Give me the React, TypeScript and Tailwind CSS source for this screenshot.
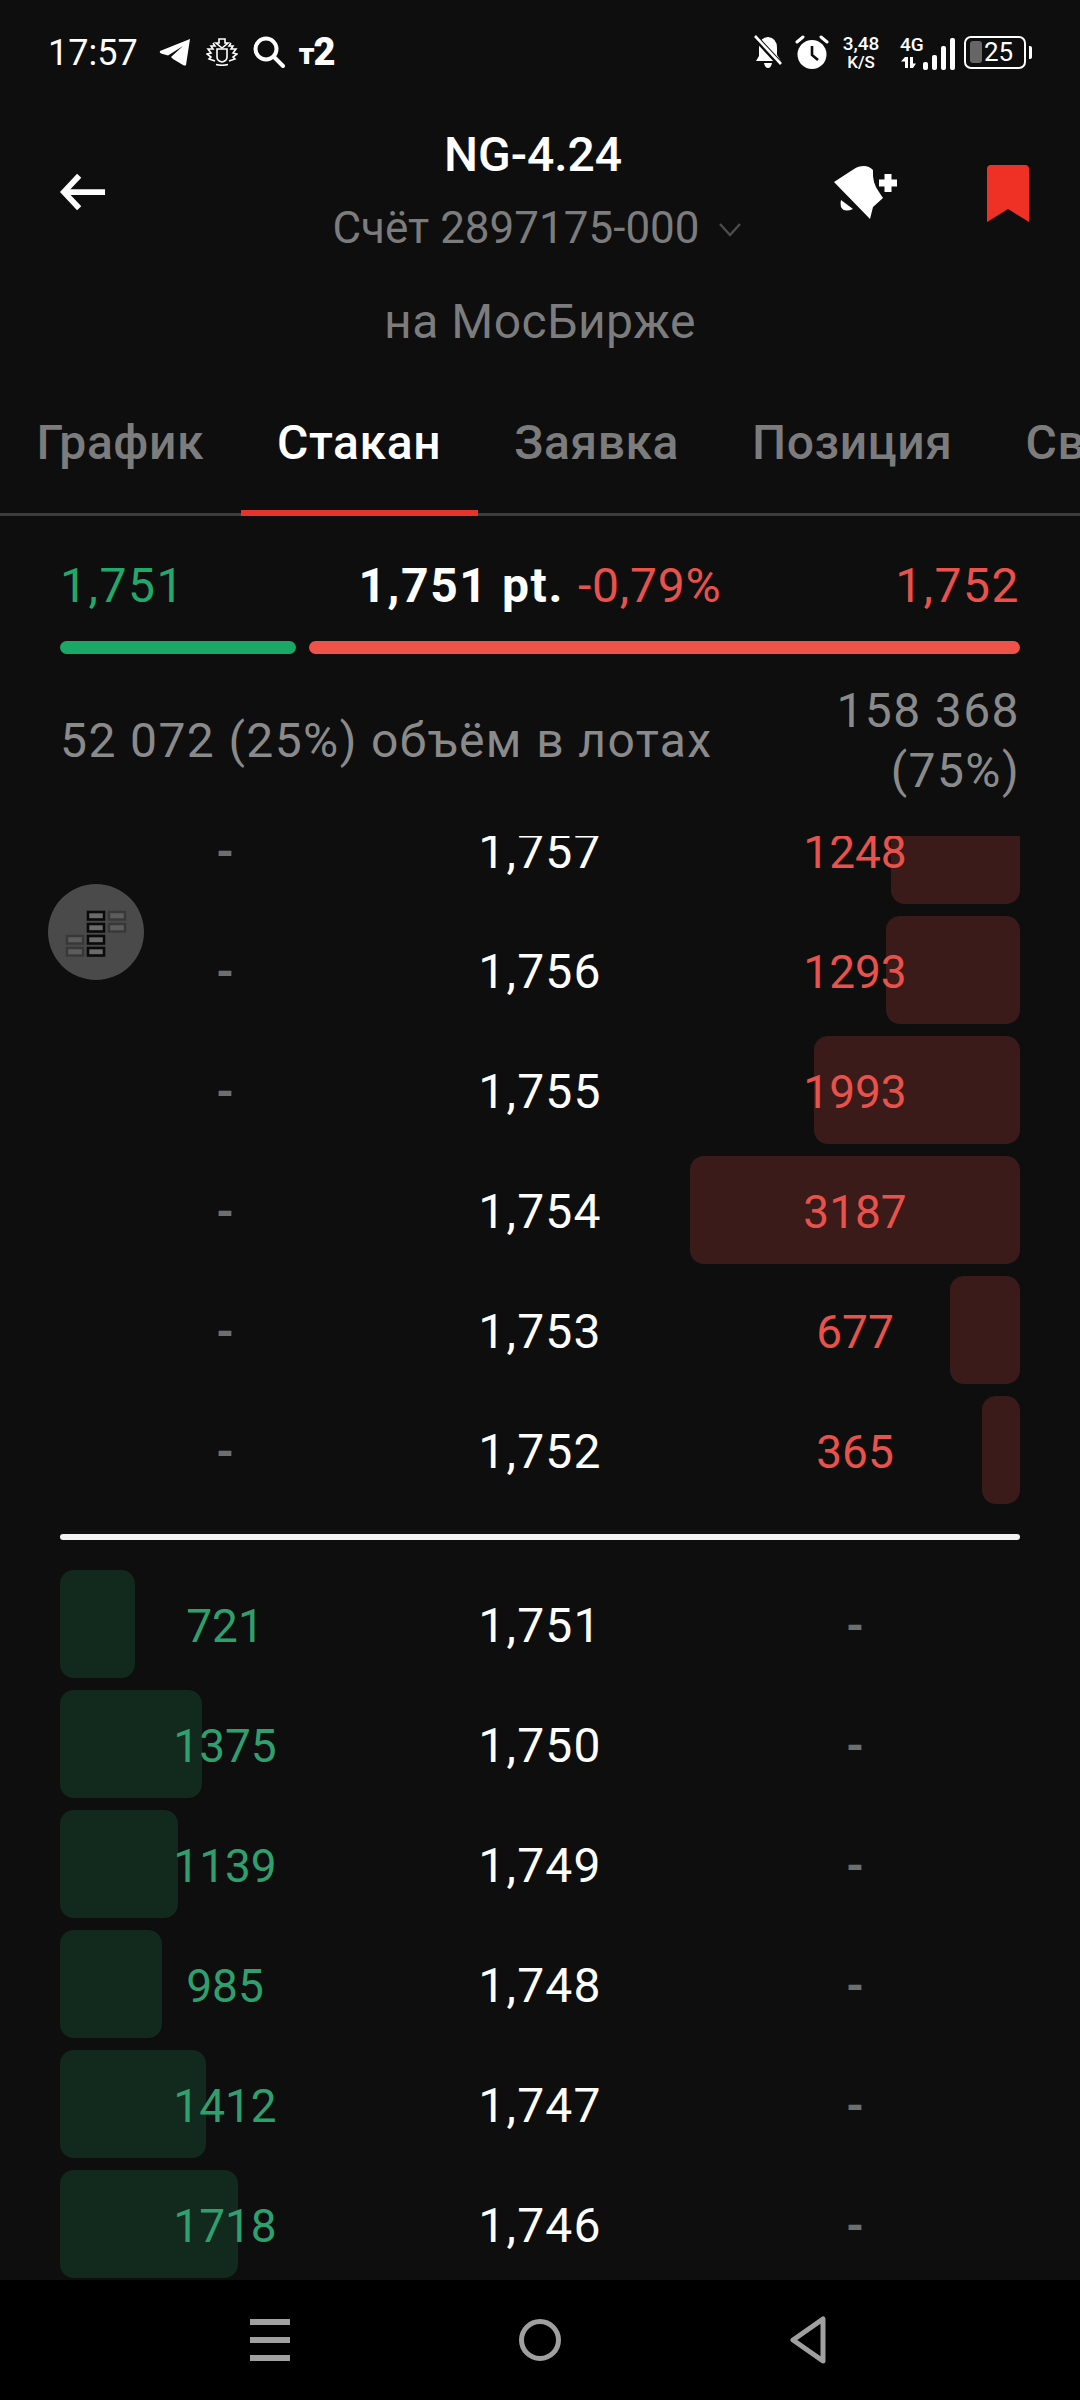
const asks = [
  { price: '1,757', qty: 1248 },
  { price: '1,756', qty: 1293 },
  { price: '1,755', qty: 1993 },
  { price: '1,754', qty: 3187 },
  { price: '1,753', qty: 677 },
  { price: '1,752', qty: 365 },
]

const bids = [
  { price: '1,751', qty: 721 },
  { price: '1,750', qty: 1375 },
  { price: '1,749', qty: 1139 },
  { price: '1,748', qty: 985 },
  { price: '1,747', qty: 1412 },
  { price: '1,746', qty: 1718 },
]

const PX_PER_LOT = 330 / 3187

function BookRow({ price, qty, side }: { price: string; qty: number; side: 'ask' | 'bid' }) {
  const isAsk = side === 'ask'
  return (
    <div className="relative h-[108px]">
      <div
        className={`absolute top-0 bottom-0 rounded-[14px] ${isAsk ? 'right-0 bg-[#3a1b1a]' : 'left-0 bg-[#12291e]'}`}
        style={{ width: Math.round(qty * PX_PER_LOT) }}
      />
      <div className="relative grid h-full grid-cols-[330px_300px_330px] items-center pt-[3px] text-[46px] leading-none">
        <span className={`text-center ${isAsk ? 'font-bold text-[#6e6e6e]' : 'text-[#2fa06d]'}`}>{isAsk ? '-' : qty}</span>
        <span className="text-center text-[48px] tracking-[1.2px] text-white">{price}</span>
        <span className={`text-center ${isAsk ? 'text-[#e8524a]' : 'font-bold text-[#6e6e6e]'}`}>{isAsk ? qty : '-'}</span>
      </div>
    </div>
  )
}

function StatusLeftIcons() {
  return (
    <div className="flex items-center">
      {/* telegram */}
      <svg width="32" height="28" viewBox="0 0 32 28" className="ml-[21px]">
        <path d="M1 13 L31 1 L27 27 Q26 28 24 27 L14 21 L12 19 L24 8 L9 17.5 L2 15.5 Q0 14 1 13 Z" fill="#fff" />
      </svg>
      {/* crest */}
      <svg width="32" height="28" viewBox="0 0 32 28" className="ml-[15px]" fill="none" stroke="#fff" strokeWidth="1.6">
        <path d="M13 1 H19 V5 H22 L16 10 L10 5 H13 Z" />
        <path d="M11 11 H21 V19 Q21 23 16 24 Q11 23 11 19 Z" />
        <path d="M7 5 L9 8 L5 8 L7 11 L2 11 L5 15 L1 16 L5 19 L3 21 L9 23" />
        <path d="M25 5 L23 8 L27 8 L25 11 L30 11 L27 15 L31 16 L27 19 L29 21 L23 23" />
        <path d="M10 26.5 Q16 28 22 26.5" />
      </svg>
      {/* search */}
      <svg width="32" height="32" viewBox="0 0 32 32" className="ml-[15px]" fill="none" stroke="#fff" strokeWidth="4" strokeLinecap="round">
        <circle cx="13" cy="13" r="10.5" />
        <path d="M21 21 L30 30" />
      </svg>
      {/* operator */}
      <span className="ml-[14px] flex items-end font-black leading-none text-white">
        <span className="text-[30px] leading-[26px]">т</span>
        <span className="-ml-[1px] text-[38px] leading-[30px]">2</span>
      </span>
    </div>
  )
}

function StatusRightIcons() {
  return (
    <div className="flex items-center">
      {/* bell off */}
      <svg width="28" height="34" viewBox="0 0 28 34">
        <path d="M14 2 Q23 3 23 13 V20 L27 26 H2 L5 21 V13 Q5 3 14 2 Z" fill="#fff" />
        <path d="M10 28 H18 Q17 33 14 33 Q11 33 10 28 Z" fill="#fff" />
        <path d="M1 2 L27 30" stroke="#0d0d0e" strokeWidth="6" />
        <path d="M1 1 L27 29" stroke="#fff" strokeWidth="2.6" />
      </svg>
      {/* alarm */}
      <svg width="34" height="34" viewBox="0 0 34 34" className="ml-[13px]">
        <circle cx="17" cy="19.5" r="14.5" fill="#fff" />
        <path d="M17 11 V20 L23 25" fill="none" stroke="#0d0d0e" strokeWidth="2.6" />
        <path d="M2 7 L8 2" stroke="#fff" strokeWidth="3" strokeLinecap="round" />
        <path d="M32 7 L26 2" stroke="#fff" strokeWidth="3" strokeLinecap="round" />
      </svg>
      <div className="ml-[13px] flex w-[38px] flex-col items-center whitespace-nowrap text-white">
        <span className="text-[19px] font-medium leading-[18px]">3,48</span>
        <span className="mt-[2px] text-[17px] font-medium leading-[15px]">K/S</span>
      </div>
      <div className="ml-[20px] flex w-[25px] flex-col items-start text-white">
        <span className="text-[19px] font-medium leading-[18px]">4G</span>
        <svg width="16" height="11" viewBox="0 0 16 11" className="mt-[3px]">
          <path d="M5 0 V11 H8 V0 Z M5 0 L1 4.5 H5 Z" fill="#fff" />
          <path d="M10 0 V11 H13 V0 Z M13 11 L16 6.5 H13 Z" fill="#fff" />
        </svg>
      </div>
      <svg width="34" height="32" viewBox="0 0 34 32" className="ml-[-2px] self-end">
        <rect x="0" y="24" width="5" height="8" rx="2" fill="#fff" />
        <rect x="9" y="17" width="5" height="15" rx="2" fill="#fff" />
        <rect x="18" y="8" width="5" height="24" rx="2" fill="#fff" />
        <rect x="27" y="0" width="5" height="32" rx="2" fill="#fff" />
      </svg>
      {/* battery */}
      <div className="ml-[7px] flex items-center">
        <div className="flex h-[33px] w-[62px] items-center rounded-[7px] border-[2.5px] border-white pl-[4px]">
          <div className="h-[22px] w-[12px] rounded-[3px] bg-[#666666]" />
          <span className="ml-[2px] text-[26px] leading-none text-white">25</span>
        </div>
        <div className="ml-[3px] h-[13px] w-[3px] rounded-r-[2px] bg-white" />
      </div>
    </div>
  )
}

function BookIcon() {
  const black = [[87, 909], [87, 921], [87, 933], [87, 945]]
  const grey = [[108, 909], [108, 921], [66, 933], [66, 945]]
  return (
    <svg width="96" height="96" viewBox="48 882 96 96">
      {grey.map(([x, y]) => (
        <rect key={`${x}-${y}`} x={x + 1} y={y + 1} width="16" height="7.5" fill="#5c5c5c" stroke="#383838" strokeWidth="2.4" />
      ))}
      {black.map(([x, y]) => (
        <rect key={y} x={x + 1} y={y + 1} width="16" height="7.5" fill="#6a6a6a" stroke="#0a0a0a" strokeWidth="2.6" />
      ))}
    </svg>
  )
}

export default function App() {
  return (
    <div className="flex h-[2400px] w-[1080px] flex-col overflow-hidden bg-[#0e0e0f] font-['Roboto',sans-serif]">
      {/* Status bar */}
      <div className="flex h-[100px] shrink-0 items-center justify-between pl-[48px] pr-[48px] pt-[4px]">
        <div className="flex items-center">
          <span className="mt-[2px] text-[36px] leading-none text-white">17:57</span>
          <StatusLeftIcons />
        </div>
        <StatusRightIcons />
      </div>

      {/* Header */}
      <div className="relative flex h-[170px] shrink-0 items-start">
        <svg width="46" height="38" viewBox="0 0 48 38" className="absolute left-[60px] top-[73px]" fill="none" stroke="#fff" strokeWidth="6">
          <path d="M20 2 L4 19 L20 36" />
          <path d="M5 19 H47" />
        </svg>
        <div className="flex w-full flex-col items-center">
          <span className="mt-[27px] -translate-x-[7px] text-[48px] font-medium leading-[56px] text-white">NG-4.24</span>
          <div className="mt-[17px] flex -translate-x-[3px] items-center text-[#7c7c7c]">
            <span className="text-[44px] leading-[56px]">Счёт 2897175-000</span>
            <svg width="24" height="14" viewBox="0 0 24 14" className="ml-[18px] mt-[4px]" fill="none" stroke="#4c4c4c" strokeWidth="2.4">
              <path d="M2 1 L12 12 L22 1" />
            </svg>
          </div>
        </div>
        <svg width="64" height="58" viewBox="0 0 64 58" className="absolute left-[834px] top-[65px]">
          <path d="M0 17 L20 4 Q24 1 30 1 Q35 1 39 5 Q38 18 45 27 Q47 30 49 33 L39 42 L36 54 Z" fill="#fff" />
          <path d="M7 35 L19 44 Q10 48 7 42 Q6 38 7 35 Z" fill="#fff" />
          <path d="M54 9 V27 M45 18 H63" stroke="#fff" strokeWidth="7" />
        </svg>
        <svg width="42" height="57" viewBox="0 0 42 57" className="absolute left-[987px] top-[65px]">
          <path d="M0 4 Q0 0 4 0 H38 Q42 0 42 4 V57 L21 44 L0 57 Z" fill="#ee3124" />
        </svg>
      </div>

      <div className="mt-[26px] h-[52px] shrink-0 text-center text-[48px] leading-[52px] tracking-[0.5px] text-[#7c7c7c]">на МосБирже</div>

      {/* Tabs */}
      <div className="relative flex h-[168px] shrink-0 overflow-hidden">
        <div className="absolute bottom-0 left-0 right-0 h-[3px] bg-[#3d3d3d]" />
        {['График', 'Стакан', 'Заявка', 'Позиция', 'Сводка'].map((tab) => (
          <div key={tab} className="relative shrink-0 px-[36.5px] pt-[67px] text-[48px] font-medium leading-[56px] tracking-[0.6px]">
            <span className={tab === 'Стакан' ? 'text-white' : 'text-[#7c7c7c]'}>{tab}</span>
            {tab === 'Стакан' && <div className="absolute bottom-0 left-0 right-0 h-[6px] bg-[#e5352b]" />}
          </div>
        ))}
      </div>

      {/* Best prices */}
      <div className="mt-[42px] flex h-[56px] shrink-0 items-center justify-between px-[60px] text-[48px]">
        <span className="leading-none tracking-[1.5px] text-[#23a86b]">1,751</span>
        <span className="flex items-baseline leading-none">
          <span className="font-bold tracking-[1.6px] text-white">1,751 pt.</span>
          <span className="ml-[14px] tracking-[0.8px] text-[#e8524a]">-0,79%</span>
        </span>
        <span className="leading-none tracking-[1.5px] text-[#e8524a]">1,752</span>
      </div>
      <div className="mt-[27px] flex shrink-0 gap-[13px] px-[60px]">
        <div className="h-[13px] w-[236px] rounded-full bg-[#19a866]" />
        <div className="h-[13px] flex-1 rounded-full bg-[#ef5249]" />
      </div>

      {/* Volumes */}
      <div className="mt-[27px] flex shrink-0 items-center justify-between px-[60px] text-[48px] leading-[60px] tracking-[1.4px] text-[#8a8a8a]">
        <span>52 072 (25%) объём в лотах</span>
        <span className="w-[220px] text-right">158 368 (75%)</span>
      </div>

      {/* Book */}
      <div className="relative mt-[35px] min-h-0 flex-1 overflow-hidden px-[60px]">
        <div className="-mt-[40px] flex flex-col gap-[12px]">
          {asks.map((row) => (
            <BookRow key={row.price} {...row} side="ask" />
          ))}
        </div>
        <div className="mb-[30px] mt-[30px] h-[6px] rounded-full bg-[#f2f2f2]" />
        <div className="flex flex-col gap-[12px]">
          {bids.map((row) => (
            <BookRow key={row.price} {...row} side="bid" />
          ))}
        </div>
        <div className="absolute left-[48px] top-[48px] h-[96px] w-[96px] rounded-full bg-[#4a4a4a]">
          <BookIcon />
        </div>
      </div>

      {/* Android nav bar */}
      <div className="relative flex h-[120px] shrink-0 items-center bg-black">
        <div className="ml-[250px] flex w-[40px] flex-col gap-[12px]">
          <div className="h-[6px] bg-[#a0a0a0]" />
          <div className="h-[6px] bg-[#a0a0a0]" />
          <div className="h-[6px] bg-[#a0a0a0]" />
        </div>
        <div className="ml-[229px] h-[42px] w-[42px] rounded-full border-[5px] border-[#a0a0a0]" />
        <svg width="36" height="48" viewBox="0 0 36 48" className="ml-[229px]" fill="none" stroke="#a0a0a0" strokeWidth="5" strokeLinejoin="round">
          <path d="M33 3 V45 L3 24 Z" />
        </svg>
      </div>
    </div>
  )
}
